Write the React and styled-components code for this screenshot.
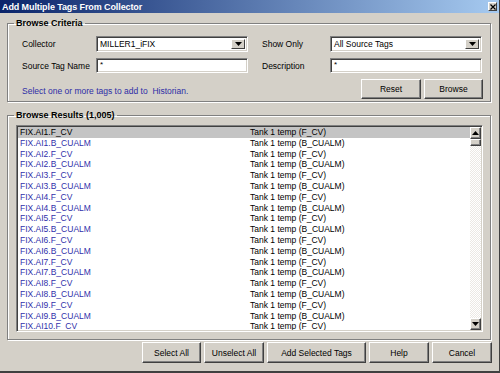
import React from "react";
import styled, { createGlobalStyle } from "styled-components";

const GlobalStyle = createGlobalStyle`
  html, body {
    margin: 0;
    padding: 0;
    background: #d4d0c8;
  }
  body {
    font-family: "Liberation Sans", Arial, sans-serif;
  }
`;

const rows = [];
for (let i = 1; i <= 10; i++) {
  rows.push({ tag: `FIX.AI${i}.F_CV`, desc: "Tank 1 temp (F_CV)" });
  rows.push({ tag: `FIX.AI${i}.B_CUALM`, desc: "Tank 1 temp (B_CUALM)" });
}

const ArrowDown = () => (
  <svg width="7" height="4" viewBox="0 0 7 4">
    <path d="M0 0h7L3.5 4z" fill="#000" />
  </svg>
);

const ArrowUp = () => (
  <svg width="7" height="4" viewBox="0 0 7 4">
    <path d="M0 4h7L3.5 0z" fill="#000" />
  </svg>
);

const App = () => {
  return (
    <>
      <GlobalStyle />
      <Window>
        <TitleBar>
          <Title>Add Multiple Tags From Collector</Title>
          <CloseButton>
            <svg width="6" height="6" viewBox="0 0 6 6">
              <path d="M0.5 0.5L5.5 5.5M5.5 0.5L0.5 5.5" stroke="#000" strokeWidth="1.2" />
            </svg>
          </CloseButton>
        </TitleBar>
        <Body>
          <CriteriaGroup>
            <Legend>Browse Criteria</Legend>
            <CriteriaGrid>
              <Label>Collector</Label>
              <Select>
                <FieldText>MILLER1_iFIX</FieldText>
                <DropButton>
                  <ArrowDown />
                </DropButton>
              </Select>
              <span />
              <Label>Show Only</Label>
              <Select>
                <FieldText>All Source Tags</FieldText>
                <DropButton>
                  <ArrowDown />
                </DropButton>
              </Select>

              <Label>Source Tag Name</Label>
              <TextInput>*</TextInput>
              <span />
              <Label>Description</Label>
              <TextInput>*</TextInput>

              <Hint>Select one or more tags to add to&nbsp; Historian.</Hint>
              <ActionRow>
                <Button $w={60}>Reset</Button>
                <Button $w={59}>Browse</Button>
              </ActionRow>
            </CriteriaGrid>
          </CriteriaGroup>

          <ResultsGroup>
            <Legend>Browse Results (1,005)</Legend>
            <ListBox>
              <Rows>
                {rows.map((row, i) => (
                  <Row key={row.tag} $selected={i === 0}>
                    <TagCell $selected={i === 0}>{row.tag}</TagCell>
                    <DescCell>{row.desc}</DescCell>
                  </Row>
                ))}
              </Rows>
              <ScrollBar>
                <ScrollButton>
                  <ArrowUp />
                </ScrollButton>
                <Thumb />
                <Track />
                <ScrollButton>
                  <ArrowDown />
                </ScrollButton>
              </ScrollBar>
            </ListBox>
          </ResultsGroup>

          <Footer>
            <Button $w={59}>Select All</Button>
            <Button $w={60}>Unselect All</Button>
            <Button $w={99}>Add Selected Tags</Button>
            <Button $w={60}>Help</Button>
            <Button $w={60}>Cancel</Button>
          </Footer>
        </Body>
      </Window>
    </>
  );
};

export default App;

const Window = styled.div`
  width: 500px;
  height: 373px;
  box-sizing: border-box;
  background: #d4d0c8;
  border-right: 1px solid #404040;
  border-bottom: 2px solid #404040;
  display: flex;
  flex-direction: column;
  font-size: 8.5px;
  color: #000;
  overflow: hidden;
`;

const TitleBar = styled.div`
  height: 13px;
  flex: none;
  background: linear-gradient(to right, #0a246a, #a6caf0);
  display: flex;
  align-items: center;
  justify-content: space-between;
  padding: 0 2px 0 2px;
`;

const Title = styled.span`
  color: #fff;
  font-weight: bold;
  font-size: 9px;
  letter-spacing: -0.1px;
`;

const CloseButton = styled.div`
  width: 9px;
  height: 9px;
  box-sizing: border-box;
  background: #d4d0c8;
  border: 1px solid;
  border-color: #fff #404040 #404040 #fff;
  display: flex;
  align-items: center;
  justify-content: center;
`;

const Body = styled.div`
  flex: 1;
  display: flex;
  flex-direction: column;
  padding: 5px 8px 0 7px;
`;

const Group = styled.fieldset`
  margin: 0;
  min-width: 0;
  border: 1px solid #808080;
  box-shadow: inset 1px 1px 0 #fff, 1px 1px 0 #fff;
`;

const CriteriaGroup = styled(Group)`
  padding: 0 9px 2px 6px;
`;

const ResultsGroup = styled(Group)`
  margin-top: 8px;
  padding: 4px 7px 7px 6px;
`;

const Legend = styled.legend`
  font-weight: bold;
  font-size: 9px;
  line-height: 11px;
  padding: 0 2px;
  color: #000;
`;

const CriteriaGrid = styled.div`
  display: grid;
  grid-template-columns: 74px 152px 14px 68px 152px;
  grid-template-rows: 16px 15px 20px;
  row-gap: 6px;
  padding: 7px 0 0 8px;
  align-items: center;
`;

const Label = styled.span`
  font-size: 8.5px;
  white-space: nowrap;
`;

const Sunken = styled.div`
  height: 100%;
  box-sizing: border-box;
  background: #fff;
  border: 1px solid;
  border-color: #808080 #fff #fff #808080;
  box-shadow: inset 1px 1px 0 #404040, inset -1px -1px 0 #d4d0c8;
`;

const Select = styled(Sunken)`
  display: flex;
  align-items: center;
  padding: 2px 2px 2px 3px;
`;

const FieldText = styled.span`
  flex: 1;
  font-size: 8.5px;
`;

const DropButton = styled.div`
  width: 14px;
  height: 100%;
  box-sizing: border-box;
  background: #d4d0c8;
  border: 1px solid;
  border-color: #fff #404040 #404040 #fff;
  display: flex;
  align-items: center;
  justify-content: center;
`;

const TextInput = styled(Sunken)`
  padding: 1px 3px;
  font-size: 8px;
  line-height: 9px;
`;

const Hint = styled.span`
  grid-column: 1 / 4;
  color: #2d2da6;
  font-size: 8.5px;
  padding-top: 3px;
`;

const ActionRow = styled.div`
  grid-column: 4 / 6;
  display: flex;
  justify-content: flex-end;
  gap: 3px;
  margin-right: -1px;
  height: 100%;
`;

const Button = styled.button`
  width: ${(p) => p.$w}px;
  height: 100%;
  box-sizing: border-box;
  padding: 0;
  background: #d4d0c8;
  border: 1px solid;
  border-color: #fff #404040 #404040 #fff;
  box-shadow: inset -1px -1px 0 #808080;
  font-family: "Liberation Sans", Arial, sans-serif;
  font-size: 8.5px;
  color: #000;
`;

const ListBox = styled.div`
  margin-left: 2px;
  height: 207px;
  box-sizing: border-box;
  background: #fff;
  border: 1px solid;
  border-color: #808080 #fff #fff #808080;
  box-shadow: inset 1px 1px 0 #404040, inset -1px -1px 0 #d4d0c8;
  padding: 1px;
  display: flex;
  overflow: hidden;
`;

const Rows = styled.div`
  flex: 1;
  overflow: hidden;
`;

const Row = styled.div`
  display: grid;
  grid-template-columns: 232px 1fr;
  height: 10.8px;
  line-height: 10.8px;
  font-size: 8.5px;
  background: ${(p) => (p.$selected ? "#c4c4c4" : "transparent")};
  white-space: nowrap;
`;

const TagCell = styled.span`
  padding-left: 2px;
  color: ${(p) => (p.$selected ? "#000" : "#3030aa")};
`;

const DescCell = styled.span`
  color: #000;
`;

const ScrollBar = styled.div`
  width: 11px;
  display: flex;
  flex-direction: column;
`;

const ScrollButton = styled.div`
  height: 12px;
  flex: none;
  box-sizing: border-box;
  background: #d4d0c8;
  border: 1px solid;
  border-color: #fff #404040 #404040 #fff;
  box-shadow: inset -1px -1px 0 #808080;
  display: flex;
  align-items: center;
  justify-content: center;
`;

const Thumb = styled(ScrollButton)`
  height: 7px;
`;

const Track = styled.div`
  flex: 1;
  background: repeating-conic-gradient(#ece9e4 0 25%, #fff 0 50%) 0 0 / 2px 2px;
`;

const Footer = styled.div`
  display: flex;
  justify-content: flex-end;
  gap: 3px;
  margin: 2px -1px 0 0;
  height: 21px;
`;
